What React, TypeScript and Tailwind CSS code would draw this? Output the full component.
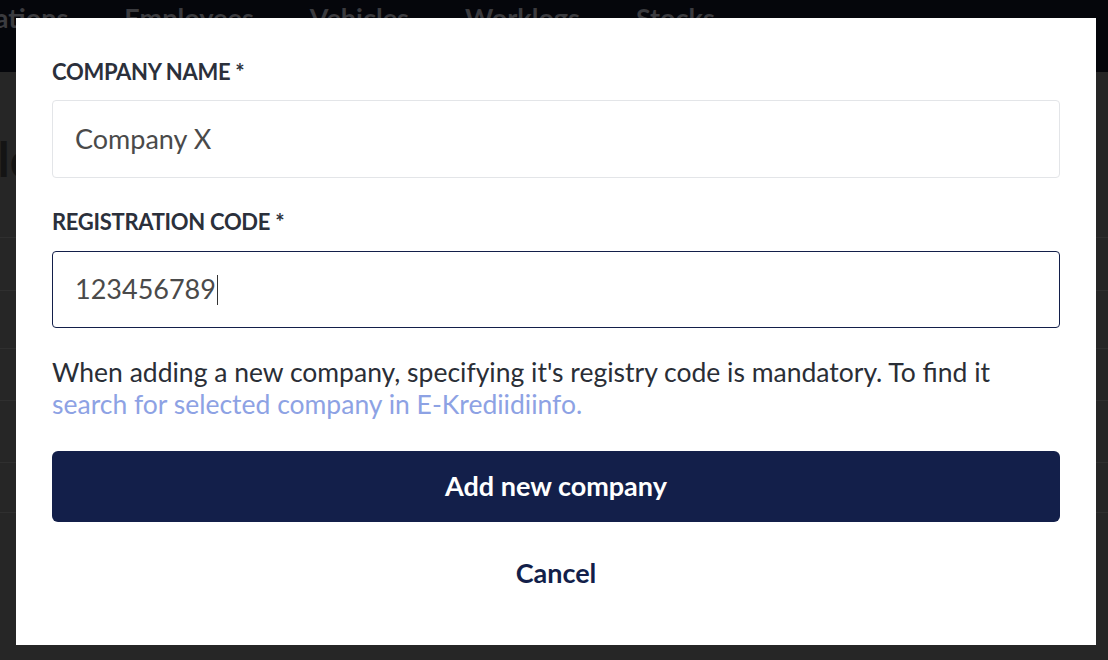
const navItems = ["Locations", "Employees", "Vehicles", "Worklogs", "Stocks"];

function Backdrop() {
  return (
    <div className="flex h-[660px] w-full flex-col bg-[#262626]">
      {/* Top navigation */}
      <div className="h-[72px] shrink-0 overflow-hidden bg-[#05060b]">
        <div className="-ml-[47px] flex gap-[56px] text-[27px] font-bold leading-[36px] text-[#3b3b3f]">
          {navItems.map((item) => (
            <span key={item}>{item}</span>
          ))}
        </div>
      </div>

      {/* Page heading */}
      <div className="h-[165px] shrink-0 pt-[55px]">
        <h1 className="-ml-[66px] text-[48px] font-bold leading-[64px] text-[#141414]">
          Holdings
        </h1>
      </div>

      {/* Table rows */}
      <div className="flex flex-col">
        {[53, 58, 52, 62, 50, 60].map((h, i) => (
          <div
            key={i}
            style={{ height: h }}
            className="border-t border-[#2f2f2f]"
          />
        ))}
      </div>
    </div>
  );
}

function Label({ children }: { children: React.ReactNode }) {
  return (
    <label className="block text-[22px] font-bold uppercase leading-[26px] tracking-[-0.3px] text-[#2b303b]">
      {children}
    </label>
  );
}

export default function App() {
  return (
    <div
      className="relative h-[660px] w-[1108px] overflow-hidden"
      style={{ fontFamily: "Lato, 'Open Sans', sans-serif" }}
    >
      <Backdrop />

      {/* Modal */}
      <div className="absolute left-4 top-[18px] flex h-[627px] w-[1080px] flex-col bg-white px-9 pt-[41px]">
        <Label>Company name *</Label>
        <div className="mt-[15px] flex h-[78px] items-center rounded border border-[#e3e5e8] px-[22px] text-[27px] text-[#4a4a4a]">
          Company X
        </div>

        <div className="mt-[31px]">
          <Label>Registration code *</Label>
        </div>
        <div className="mt-4 flex h-[77px] items-center rounded border border-[#131f4a] px-[22px] text-[27px] text-[#4a4a4a]">
          123456789
          <span className="ml-px h-[30px] w-px bg-[#333]" />
        </div>

        <p className="mt-7 text-[26.5px] leading-8 text-[#2a2e36]">
          When adding a new company, specifying it's registry code is mandatory. To find it{" "}
          <a href="#" className="text-[#8da2e4]">
            search for selected company in E-Krediidiinfo.
          </a>
        </p>

        <button className="mt-[31px] h-[71px] w-full shrink-0 rounded-md bg-[#131f4a] text-[27px] font-bold text-white">
          Add new company
        </button>

        <button className="mt-[35px] self-center text-[27px] font-bold leading-8 text-[#131f4a]">
          Cancel
        </button>
      </div>
    </div>
  );
}
